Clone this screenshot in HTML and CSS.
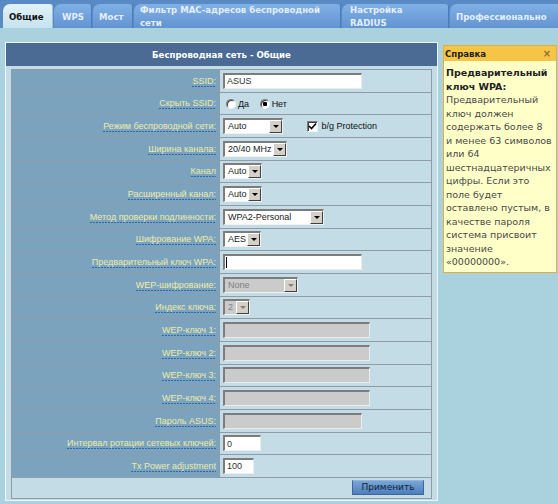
FILE: index.html
```html
<!DOCTYPE html>
<html lang="ru">
<head>
    <meta charset="UTF-8">
    <title>Беспроводная сеть - Общие</title>
    <link rel="stylesheet" href="styles.css">
</head>
<body>
    <div class="tabs">
        <a class="tab tab-active t-general">Общие</a>
        <a class="tab t-wps">WPS</a>
        <a class="tab t-bridge">Мост</a>
        <a class="tab t-mac">Фильтр MAC-адресов беспроводной сети</a>
        <a class="tab t-radius">Настройка RADIUS</a>
        <a class="tab t-pro">Профессионально</a>
    </div>

    <div class="page">
        <div class="panel">
            <div class="panel-head">Беспроводная сеть - Общие</div>
            <div class="panel-body">
                <table class="form">
                    <tr>
                        <th><span class="lbl">SSID:</span></th>
                        <td><input class="txt w139" type="text" value="ASUS"></td>
                    </tr>
                    <tr>
                        <th><span class="lbl">Скрыть SSID:</span></th>
                        <td>
                            <label class="opt"><span class="radio"></span>Да</label>
                            <label class="opt"><span class="radio checked"></span>Нет</label>
                        </td>
                    </tr>
                    <tr>
                        <th><span class="lbl">Режим беспроводной сети:</span></th>
                        <td>
                            <span class="sel w60"><span class="sel-val">Auto</span><span class="sel-btn"></span></span>
                            <label class="opt opt-bg"><span class="chk"><svg width="9" height="9" viewBox="0 0 9 9"><path d="M1 4 L3.5 6.5 L8 1.5" fill="none" stroke="#000" stroke-width="1.6"/></svg></span>b/g Protection</label>
                        </td>
                    </tr>
                    <tr>
                        <th><span class="lbl">Ширина канала:</span></th>
                        <td><span class="sel w64"><span class="sel-val">20/40 MHz</span><span class="sel-btn"></span></span></td>
                    </tr>
                    <tr>
                        <th><span class="lbl">Канал</span></th>
                        <td><span class="sel w39"><span class="sel-val">Auto</span><span class="sel-btn"></span></span></td>
                    </tr>
                    <tr>
                        <th><span class="lbl">Расширенный канал:</span></th>
                        <td><span class="sel w39"><span class="sel-val">Auto</span><span class="sel-btn"></span></span></td>
                    </tr>
                    <tr>
                        <th><span class="lbl">Метод проверки подлинности:</span></th>
                        <td><span class="sel w101"><span class="sel-val">WPA2-Personal</span><span class="sel-btn"></span></span></td>
                    </tr>
                    <tr>
                        <th><span class="lbl">Шифрование WPA:</span></th>
                        <td><span class="sel w38"><span class="sel-val">AES</span><span class="sel-btn"></span></span></td>
                    </tr>
                    <tr>
                        <th><span class="lbl">Предварительный ключ WPA:</span></th>
                        <td><span class="caret-wrap"><input class="txt w139" type="text" value=""></span></td>
                    </tr>
                    <tr>
                        <th><span class="lbl">WEP-шифрование:</span></th>
                        <td><span class="sel sel-off w75"><span class="sel-val">None</span><span class="sel-btn"></span></span></td>
                    </tr>
                    <tr>
                        <th><span class="lbl">Индекс ключа:</span></th>
                        <td><span class="sel sel-off w27"><span class="sel-val">2</span><span class="sel-btn"></span></span></td>
                    </tr>
                    <tr>
                        <th><span class="lbl">WEP-ключ 1:</span></th>
                        <td><input class="txt w147" type="text" disabled></td>
                    </tr>
                    <tr>
                        <th><span class="lbl">WEP-ключ 2:</span></th>
                        <td><input class="txt w147" type="text" disabled></td>
                    </tr>
                    <tr>
                        <th><span class="lbl">WEP-ключ 3:</span></th>
                        <td><input class="txt w147" type="text" disabled></td>
                    </tr>
                    <tr>
                        <th><span class="lbl">WEP-ключ 4:</span></th>
                        <td><input class="txt w147" type="text" disabled></td>
                    </tr>
                    <tr>
                        <th><span class="lbl">Пароль ASUS:</span></th>
                        <td><input class="txt w139" type="text" disabled></td>
                    </tr>
                    <tr>
                        <th><span class="lbl">Интервал ротации сетевых ключей:</span></th>
                        <td><input class="txt w38" type="text" value="0"></td>
                    </tr>
                    <tr>
                        <th><span class="lbl">Tx Power adjustment</span></th>
                        <td><input class="txt w31" type="text" value="100"></td>
                    </tr>
                    <tr>
                        <td class="actions" colspan="2"><button class="apply">Применить</button></td>
                    </tr>
                </table>
            </div>
        </div>

        <div class="help">
            <div class="help-head">
                <span>Справка</span>
                <span class="help-close">×</span>
            </div>
            <div class="help-body">
                <b>Предварительный ключ WPA:</b>
                Предварительный ключ должен содержать более 8 и&nbsp;менее 63 символов или 64 шестнадцатеричных цифры. Если это поле будет оставлено пустым, в качестве пароля система присвоит значение «00000000».
            </div>
        </div>
    </div>
</body>
</html>
```

FILE: styles.css
```css
body {
    margin: 0;
    background-color: #a9d1de;
    font-family: "Liberation Sans", Arial, sans-serif;
    font-size: 9px;
}

/* top tabs */
.tabs {
    display: flex;
    align-items: flex-end;
    gap: 1px;
    height: 28px;
    padding-left: 3px;
    background-color: #5a8ac6;
    box-sizing: border-box;
    overflow: hidden;
}

.tab {
    flex: none;
    display: flex;
    align-items: center;
    height: 24px;
    padding: 0 6px;
    box-sizing: border-box;
    font-family: "DejaVu Sans Condensed", "DejaVu Sans", sans-serif;
    font-stretch: condensed;
    font-weight: bold;
    font-size: 9.5px;
    line-height: 13px;
    color: #e4eef9;
    background: linear-gradient(#80b0e4, #6394d2);
    border-radius: 7px 3px 0 0;
    border-right: 1px solid #4c7cb8;
}

.tab-active {
    color: #111;
    background: linear-gradient(#e2f1f7, #c6e3ee);
    border-right-color: #9cc4d6;
}

.t-general { width: 50px; }
.t-wps { width: 38px; padding-left: 8px; }
.t-bridge { width: 40px; }
.t-mac { width: 207px; }
.t-radius { width: 107px; padding-left: 8px; }
.t-pro { width: 120px; }

/* content */
.page {
    display: flex;
    align-items: flex-start;
    gap: 5px;
    padding: 14px 0 0 5px;
}

.panel {
    width: 433px;
    box-sizing: border-box;
    border: 1px solid #eef5f8;
    background-color: #c3dce5;
}

.panel-head {
    height: 23px;
    line-height: 23px;
    text-align: center;
    background-color: #4b6b95;
    color: #fff;
    font-family: "DejaVu Sans Condensed", "DejaVu Sans", sans-serif;
    font-stretch: condensed;
    font-weight: bold;
    font-size: 9.5px;
}

.panel-body {
    padding: 3px 5px 1px 5px;
}

.form {
    width: 100%;
    border-collapse: collapse;
    border: 1px solid #8d9ca6;
}

.form th,
.form td {
    height: 21.67px;
    padding: 0 0 0 3px;
    border: 1px solid #8d9ca6;
    vertical-align: middle;
}

.form th {
    width: 204px;
    padding: 0 3px 0 0;
    text-align: right;
    font-weight: normal;
    background-color: #7ba3bd;
}

.form td {
    background-color: #c3dce5;
    white-space: nowrap;
}

.form .actions {
    height: 20px;
    text-align: right;
    padding-right: 7px;
}

.lbl {
    color: #eeeca8;
    padding-bottom: 1px;
    background: repeating-linear-gradient(90deg, #2a68b4 0 2px, transparent 2px 3px) left bottom / 100% 1px no-repeat;
}

/* inputs */
.txt {
    height: 16px;
    box-sizing: border-box;
    margin: 0;
    padding: 0 2px;
    border-style: solid;
    border-width: 2px 1px 1px 2px;
    border-color: #7c7c7c #ececec #ececec #7c7c7c;
    background-color: #fff;
    font-family: "Liberation Sans", Arial, sans-serif;
    font-size: 9px;
    color: #333;
    vertical-align: middle;
    outline: none;
}

.txt:disabled {
    background-color: #cbcbcb;
}

.caret-wrap {
    position: relative;
    display: inline-block;
    vertical-align: middle;
}

.caret-wrap::after {
    content: "";
    position: absolute;
    left: 3px;
    top: 3px;
    width: 1px;
    height: 11px;
    background-color: #000;
}

.w27 { width: 27px; }
.w31 { width: 31px; }
.w38 { width: 38px; }
.w39 { width: 39px; }
.w60 { width: 60px; }
.w64 { width: 64px; }
.w75 { width: 75px; }
.w101 { width: 101px; }
.w139 { width: 139px; }
.w147 { width: 147px; }

/* fake classic selects */
.sel {
    display: inline-flex;
    height: 16px;
    box-sizing: border-box;
    border-style: solid;
    border-width: 2px 1px 1px 2px;
    border-color: #7c7c7c #f2f2f2 #f2f2f2 #7c7c7c;
    background-color: #fff;
    vertical-align: middle;
}

.sel-val {
    flex: 1;
    padding-left: 3px;
    line-height: 13px;
    color: #222;
    overflow: hidden;
}

.sel-btn {
    display: flex;
    align-items: center;
    justify-content: center;
    width: 13px;
    box-sizing: border-box;
    background-color: #d4d0c8;
    border: 1px solid;
    border-color: #fff #404040 #404040 #fff;
}

.sel-btn::after {
    content: "";
    border-left: 3px solid transparent;
    border-right: 3px solid transparent;
    border-top: 3px solid #000;
}

.sel-off {
    background-color: #cbcbcb;
}

.sel-off .sel-val {
    color: #808080;
}

.sel-off .sel-btn::after {
    border-top-color: #808080;
}

/* radios / checkbox */
.opt {
    display: inline-flex;
    align-items: center;
    gap: 2px;
    margin-right: 5px;
    color: #111;
    vertical-align: middle;
}

.opt .radio {
    margin-left: 3px;
}

.opt-bg {
    margin-left: 21px;
    gap: 4px;
}

.radio {
    width: 10px;
    height: 10px;
    box-sizing: border-box;
    border-radius: 50%;
    border: 1px solid;
    border-color: #7c7c7c #f4f4f4 #f4f4f4 #7c7c7c;
    background: #fff;
    box-shadow: inset 1px 1px 0 #404040;
}

.radio.checked {
    background: radial-gradient(circle, #000 0 2px, #fff 2.5px);
}

.chk {
    display: flex;
    align-items: center;
    justify-content: center;
    width: 11px;
    height: 11px;
    box-sizing: border-box;
    border: 1px solid;
    border-color: #7c7c7c #f4f4f4 #f4f4f4 #7c7c7c;
    box-shadow: inset 1px 1px 0 #404040;
    background: #fff;
}

.apply {
    width: 72px;
    height: 15px;
    padding: 0;
    border: 1px solid #3f669a;
    border-top-color: #8fb4e0;
    background: linear-gradient(#79a5d8, #4d7fbc);
    color: #0f1f33;
    font-family: "DejaVu Sans", sans-serif;
    font-size: 9px;
    line-height: 13px;
    vertical-align: middle;
}

/* help box */
.help {
    width: 114px;
    margin-top: 3px;
    box-sizing: border-box;
    border: 1px solid #e2b13c;
    background-color: #ffffc8;
}

.help-head {
    display: flex;
    justify-content: space-between;
    height: 15px;
    padding: 0 5px 0 1px;
    line-height: 15px;
    background-color: #f6c545;
    font-family: "DejaVu Sans Condensed", "DejaVu Sans", sans-serif;
    font-stretch: condensed;
    font-weight: bold;
    font-size: 9.5px;
    color: #222;
}

.help-close {
    color: #8f7037;
    font-size: 11px;
}

.help-body {
    padding: 5px 2px 3px 2px;
    font-family: "DejaVu Sans", sans-serif;
    font-size: 9.5px;
    line-height: 13.5px;
    color: #4a4a4a;
}

.help-body b {
    display: block;
    color: #222;
}
```
